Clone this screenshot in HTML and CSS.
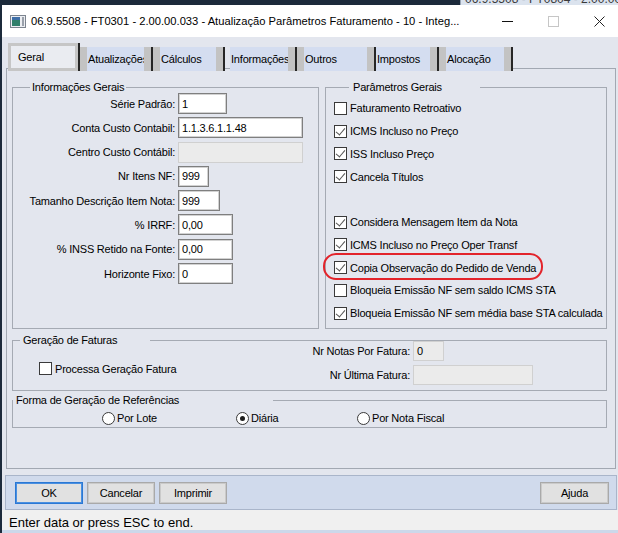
FILE: index.html
```html
<!DOCTYPE html>
<html lang="pt-BR">
<head>
  <meta charset="UTF-8">
  <title>Atualização Parâmetros Faturamento</title>
  <link rel="stylesheet" href="styles.css">
</head>
<body>

  <div class="behind">
    <span class="behind-title">06.9.5508 - FT0804 - 2.00.00.033</span>
  </div>

  <div class="window">
    <div class="titlebar">
      <svg class="app-icon" width="16" height="13" viewBox="0 0 16 13">
        <rect x="0.5" y="0.5" width="15" height="12" fill="#eceef2" stroke="#7c848f"/>
        <rect x="2" y="2" width="8" height="9" fill="#2f7f6a"/>
        <rect x="2" y="2" width="8" height="3" fill="#3f6fa8"/>
        <rect x="12" y="2" width="2" height="9" fill="#9aa1ab"/>
      </svg>
      <span class="title">06.9.5508 - FT0301 - 2.00.00.033 - Atualização Parâmetros Faturamento - 10 - Integ...</span>
      <span class="caption min">
        <svg width="11" height="11" viewBox="0 0 11 11"><path d="M0 5.5 H11" stroke="#111" stroke-width="1"/></svg>
      </span>
      <span class="caption">
        <svg width="11" height="11" viewBox="0 0 11 11"><rect x="0.5" y="0.5" width="10" height="10" fill="none" stroke="#c6c6c6"/></svg>
      </span>
      <span class="caption close">
        <svg width="11" height="11" viewBox="0 0 11 11"><path d="M0.5 0.5 L10.5 10.5 M10.5 0.5 L0.5 10.5" stroke="#222" stroke-width="1"/></svg>
      </span>
    </div>

    <div class="client">
      <div class="tabs">
        <div class="tab active"><span>Geral</span></div>
        <div class="tab lb tab-atu"><span>Atualizações</span></div>
        <div class="tab lb tab-calc"><span>Cálculos</span></div>
        <div class="tab tab-info"><span>Informações</span></div>
        <div class="tab lb tab-outros"><span>Outros</span></div>
        <div class="tab tab-imp"><span>Impostos</span></div>
        <div class="tab lb tab-aloc"><span>Alocação</span></div>
      </div>

      <div class="panel">
        <div class="top-row">
          <fieldset class="group info">
            <legend>Informações Gerais</legend>
            <div class="form-grid">
              <label>Série Padrão:</label><span class="field w49">1</span>
              <label>Conta Custo Contabil:</label><span class="field w125">1.1.3.6.1.1.48</span>
              <label>Centro Custo Contábil:</label><span class="field w125 disabled"></span>
              <label>Nr Itens NF:</label><span class="field w31">999</span>
              <label>Tamanho Descrição Item Nota:</label><span class="field w42">999</span>
              <label>% IRRF:</label><span class="field w55">0,00</span>
              <label>% INSS Retido na Fonte:</label><span class="field w55">0,00</span>
              <label>Horizonte Fixo:</label><span class="field w55">0</span>
            </div>
          </fieldset>

          <fieldset class="group params">
            <legend>Parâmetros Gerais</legend>
            <div class="check-list">
              <div class="check-row"><span class="cb"></span>Faturamento Retroativo</div>
              <div class="check-row"><span class="cb on"></span>ICMS Incluso no Preço</div>
              <div class="check-row"><span class="cb on"></span>ISS Incluso Preço</div>
              <div class="check-row"><span class="cb on"></span>Cancela Títulos</div>
              <div class="check-row"></div>
              <div class="check-row"><span class="cb on"></span>Considera Mensagem Item da Nota</div>
              <div class="check-row"><span class="cb on"></span>ICMS Incluso no Preço Oper Transf</div>
              <div class="check-row marked"><span class="cb on"></span>Copia Observação do Pedido de Venda<span class="mark"></span></div>
              <div class="check-row"><span class="cb"></span>Bloqueia Emissão NF sem saldo ICMS STA</div>
              <div class="check-row"><span class="cb on"></span>Bloqueia Emissão NF sem média base STA calculada</div>
            </div>
          </fieldset>
        </div>

        <fieldset class="group faturas">
          <legend>Geração de Faturas</legend>
          <div class="faturas-grid">
            <span></span>
            <label>Nr Notas Por Fatura:</label><span class="field w31 disabled">0</span>
            <div class="check-row processa"><span class="cb"></span>Processa Geração Fatura</div>
            <label>Nr Última Fatura:</label><span class="field w120 disabled"></span>
          </div>
        </fieldset>

        <fieldset class="group forma">
          <legend>Forma de Geração de Referências</legend>
          <div class="radio-grid">
            <span></span>
            <div class="radio-row"><span class="rb"></span>Por Lote</div>
            <div class="radio-row"><span class="rb on"></span>Diária</div>
            <div class="radio-row"><span class="rb"></span>Por Nota Fiscal</div>
          </div>
        </fieldset>
      </div>

      <div class="button-bar">
        <button class="btn default">OK</button>
        <button class="btn">Cancelar</button>
        <button class="btn">Imprimir</button>
        <button class="btn help">Ajuda</button>
      </div>
    </div>

    <div class="statusbar">Enter data or press ESC to end.</div>
    <div class="taskstrip"></div>
  </div>

</body>
</html>
```

FILE: styles.css
```css
* {
  box-sizing: border-box;
}

body {
  margin: 0;
  width: 618px;
  height: 533px;
  overflow: hidden;
  background: #1c2a3b;
  font-family: "Liberation Sans", Arial, sans-serif;
  font-size: 11px;
  letter-spacing: -0.2px;
  color: #000;
}

/* window behind, barely visible at the top */
.behind {
  height: 5px;
  overflow: hidden;
  display: flex;
  justify-content: flex-end;
}

.behind-title {
  width: 158px;
  margin-top: -7px;
  padding-left: 4px;
  background: #dbe3ee;
  border-left: 1px solid #9aa6b6;
  color: #3a3a3a;
  font-size: 12px;
  line-height: 12px;
  letter-spacing: 0;
  white-space: nowrap;
}

.window {
  margin-left: 2px;
  width: 616px;
  background: #e3e6ee;
}

.titlebar {
  height: 32px;
  display: flex;
  align-items: center;
  background: #fff;
}

.app-icon {
  margin-left: 8px;
  flex: none;
}

.title {
  margin-left: 5px;
  font-size: 11.2px;
  letter-spacing: 0;
  white-space: nowrap;
}

.caption {
  width: 46px;
  height: 32px;
  flex: none;
  display: flex;
  align-items: center;
  justify-content: center;
}

.caption.min {
  margin-left: auto;
}

.caption.close {
  width: 42px;
  padding-left: 4px;
}

/* tabs */
.client {
  padding-top: 6px;
}

.tabs {
  display: flex;
  align-items: flex-end;
  height: 28px;
  margin-left: 6px;
  position: relative;
  z-index: 1;
}

.tab {
  height: 24px;
  display: flex;
  align-items: center;
  background: #d4ddf0;
  padding-right: 7px;
  box-shadow: inset -7px 0 0 #c3c3c3;
  border-right: 2px solid #262626;
}

.tab span {
  flex: 1;
  min-width: 0;
  overflow: hidden;
  white-space: nowrap;
  padding-left: 1px;
}

.tab.lb {
  border-left: 7px solid #c3c3c3;
}

.tab.active {
  width: 70px;
  height: 28px;
  margin-right: 2px;
  padding: 0 0 0 6px;
  background: #eaecf1;
  border: 3px solid #c6c6c6;
  box-shadow: 2px 0 0 #262626;
}

.tab-atu { width: 73px; }
.tab-calc { width: 72px; }
.tab-info { width: 67px; margin-left: 5px; }
.tab-outros { width: 79px; }
.tab-imp { width: 63px; }
.tab-aloc { width: 74px; }

/* main panel */
.panel {
  margin: -3px 2px 0 4px;
  height: 401px;
  border: 1px solid #a2a8b2;
  padding: 12px 8px 0 5px;
}

.top-row {
  display: flex;
  gap: 6px;
  height: 248px;
}

.group {
  margin: 0;
  padding: 0;
  min-width: 0;
  border: 1px solid #a5aab3;
}

.group legend {
  padding: 0 2px;
  line-height: 12px;
}

.info {
  width: 307px;
  flex: none;
}

.info legend {
  margin-left: 17px;
}

.params {
  flex: 1;
}

.params legend {
  margin-left: 23px;
  width: 131px;
  padding-left: 4px;
}

.form-grid {
  display: grid;
  grid-template-columns: 162px auto;
  grid-auto-rows: 21px;
  column-gap: 3px;
  row-gap: 3.3px;
}

.form-grid label,
.faturas-grid label {
  justify-self: end;
  align-self: center;
  white-space: nowrap;
}

.field {
  display: flex;
  align-items: center;
  height: 21px;
  padding-left: 3px;
  background: #fff;
  border: 1px solid #7f7f7f;
  box-shadow: inset 0 0 0 1px #d2d2d2;
  white-space: nowrap;
}

.field.disabled {
  background: #ebebeb;
  border-color: #d0d0d0;
  box-shadow: none;
}

.w31 { width: 31px; }
.w42 { width: 42px; }
.w49 { width: 49px; }
.w55 { width: 55px; }
.w120 { width: 120px; }
.w125 { width: 125px; }

/* checkboxes and radios */
.check-list {
  padding: 4px 0 0 8px;
}

.check-row {
  height: 22.75px;
  display: flex;
  align-items: center;
  gap: 3px;
  white-space: nowrap;
}

.check-row.marked {
  position: relative;
}

.mark {
  position: absolute;
  left: -11px;
  top: -3px;
  width: 220px;
  height: 27px;
  border: 2.5px solid #e3242b;
  border-radius: 13px;
  pointer-events: none;
}

.cb {
  width: 13px;
  height: 13px;
  flex: none;
  position: relative;
  background: #fff;
  border: 1px solid #3a3a3a;
}

.cb.on::after {
  content: "";
  position: absolute;
  left: 3px;
  top: 0;
  width: 4px;
  height: 8px;
  border: solid #555;
  border-width: 0 1.5px 1.5px 0;
  transform: rotate(40deg);
}

.radio-row {
  height: 14px;
  display: flex;
  align-items: center;
  gap: 2px;
  white-space: nowrap;
}

.rb {
  width: 13px;
  height: 13px;
  flex: none;
  border-radius: 50%;
  background: #fff;
  border: 1px solid #3a3a3a;
  display: flex;
  align-items: center;
  justify-content: center;
}

.rb.on::after {
  content: "";
  width: 5px;
  height: 5px;
  border-radius: 50%;
  background: #1e1e1e;
}

/* bottom groups */
.faturas {
  margin-top: 5px;
  padding-bottom: 5px;
}

.faturas legend {
  margin-left: 7px;
  width: 130px;
  padding-left: 3px;
}

.faturas-grid {
  margin-top: -5px;
  display: grid;
  grid-template-columns: 180px 214px auto;
  grid-auto-rows: 20px;
  column-gap: 3px;
  row-gap: 4px;
}

.faturas-grid .field {
  height: 20px;
}

.check-row.processa {
  height: 13px;
  align-self: start;
  margin-top: -3px;
  padding-left: 26px;
}

.forma {
  margin-top: 3px;
  padding-bottom: 2px;
}

.forma legend {
  margin-left: 0;
  width: 260px;
  padding-left: 3px;
}

.radio-grid {
  margin-top: 5px;
  display: grid;
  grid-template-columns: 89px 134px 121px auto;
}

/* buttons */
.button-bar {
  margin: 6px 1px 0 3px;
  height: 35px;
  display: flex;
  align-items: center;
  gap: 4px;
  padding: 0 7px 0 9px;
  background: #d0daec;
  border: 1px solid #a9b5ca;
}

.btn {
  width: 68px;
  height: 22px;
  padding: 0;
  font-family: inherit;
  font-size: 11px;
  letter-spacing: -0.2px;
  color: #000;
  background: #e1e1e1;
  border: 1px solid #a9a9a9;
  box-shadow: inset 0 0 0 1px #cacaca;
}

.btn.default {
  border-color: #2a78d4;
  box-shadow: inset 0 0 0 1px #4a8fe0;
}

.btn.help {
  margin-left: auto;
  width: 69px;
}

.statusbar {
  height: 20px;
  padding: 5px 0 0 7px;
  background: #f0f0f0;
  font-size: 13px;
  letter-spacing: 0;
  line-height: 15px;
  white-space: nowrap;
}

.taskstrip {
  height: 3px;
  background: #ccd8ea;
}
```
